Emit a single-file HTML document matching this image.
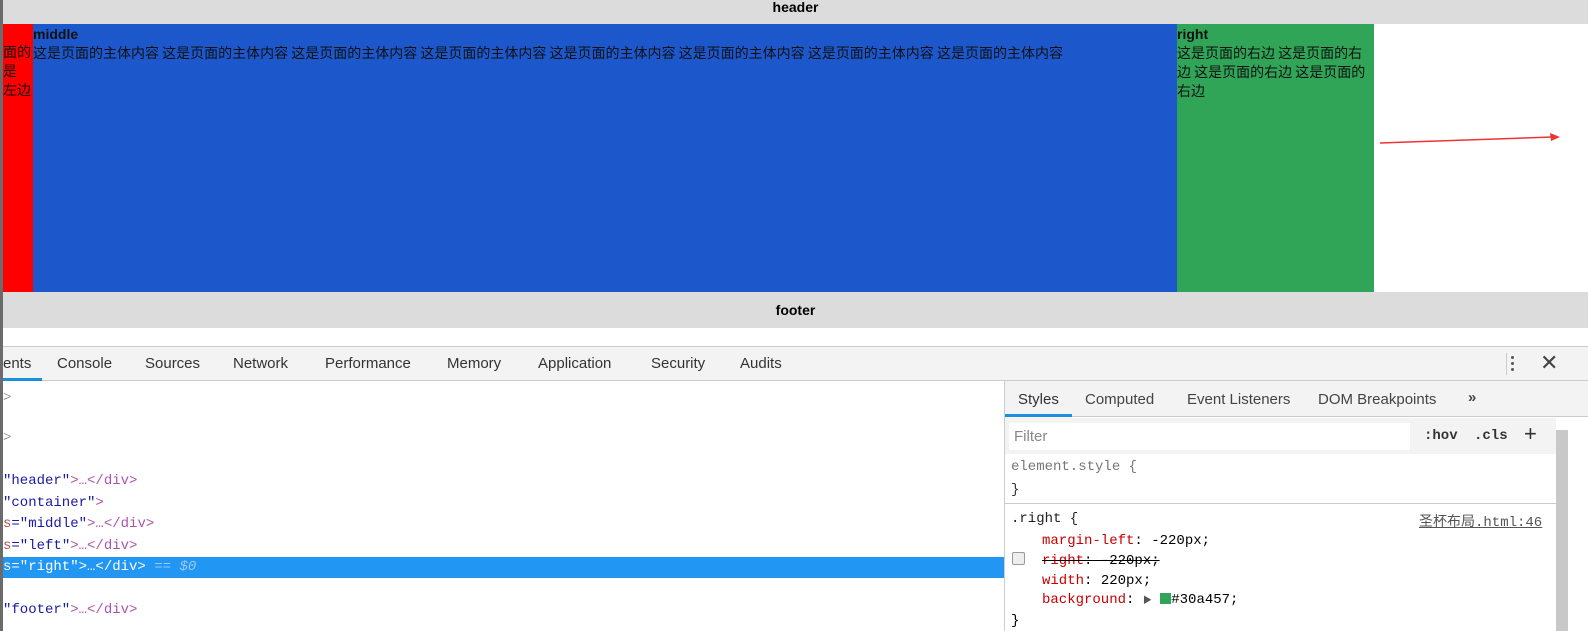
<!DOCTYPE html>
<html><head><meta charset="utf-8"><style>
*{margin:0;padding:0;box-sizing:border-box}
body{width:1588px;height:631px;overflow:hidden;background:#fff;font-family:"Liberation Sans","Noto Sans CJK SC",sans-serif;font-size:13px;position:relative}
.a{position:absolute}
.mono{font-family:"Liberation Mono","Noto Sans CJK SC",monospace;font-size:14px}
.cn{font-family:"Noto Sans CJK SC","WenQuanYi Zen Hei",sans-serif;font-size:14px;line-height:19px;color:#111}
.tab{position:absolute;top:355px;font-size:15px;color:#333}
.st{position:absolute;font-size:15px;color:#444}
.p{color:#c80000}
</style></head><body>
<div class="a" style="left:0;top:0;width:3px;height:631px;background:#6b6b6b"></div>
<div class="a" style="left:3px;top:0;right:0;height:24px;background:#dcdcdc;text-align:center;font-weight:bold;font-size:14px;line-height:14px;padding-top:0">header</div>
<div class="a" style="left:3px;top:24px;width:30px;height:268px;background:#ff0000;overflow:hidden"><div class="cn" style="position:absolute;left:-14px;top:19px;width:45px">页面的<br>这是<br>的左边</div></div>
<div class="a" style="left:33px;top:24px;width:1144px;height:268px;background:#1c58cc"><div style="font-weight:bold;font-size:14px;line-height:19px;color:#111;margin-top:1px">middle</div><div class="cn">这是页面的主体内容 这是页面的主体内容 这是页面的主体内容 这是页面的主体内容 这是页面的主体内容 这是页面的主体内容 这是页面的主体内容 这是页面的主体内容</div></div>
<div class="a" style="left:1177px;top:24px;width:197px;height:268px;background:#30a457"><div style="font-weight:bold;font-size:14px;line-height:19px;color:#111;margin-top:1px">right</div><div class="cn" style="word-break:break-all">这是页面的右边 这是页面的右边 这是页面的右边 这是页面的右边</div></div>
<svg class="a" style="left:1370px;top:125px" width="200" height="30"><line x1="10" y1="18" x2="182" y2="12" stroke="#e33" stroke-width="1.5"/><polygon points="190,12 180,8 181,16" fill="#e33"/></svg>
<div class="a" style="left:3px;top:292px;right:0;height:36px;background:#dcdcdc;text-align:center;font-weight:bold;font-size:14px;line-height:36px">footer</div>
<div class="a" style="left:3px;top:346px;right:0;height:35px;background:#f3f3f3;border-top:1px solid #ccc;border-bottom:1px solid #ccc"></div>
<div class="a" style="left:3px;top:378px;width:39px;height:3px;background:#1a8fe0"></div>
<div class="tab" style="left:3px">ents</div>
<div class="tab" style="left:57px">Console</div>
<div class="tab" style="left:145px">Sources</div>
<div class="tab" style="left:233px">Network</div>
<div class="tab" style="left:325px">Performance</div>
<div class="tab" style="left:447px">Memory</div>
<div class="tab" style="left:538px">Application</div>
<div class="tab" style="left:651px">Security</div>
<div class="tab" style="left:740px">Audits</div>
<div class="a" style="left:1506px;top:353px;width:1px;height:22px;background:#ccc"></div>
<div class="a" style="left:1511px;top:356px;width:3px;height:3px;border-radius:2px;background:#555;box-shadow:0 6px 0 #555,0 12px 0 #555"></div>
<div class="a" style="left:1540px;top:350px;font-size:22px;color:#444">✕</div>
<div class="a mono" style="left:3px;top:390px;color:#999">&gt;</div>
<div class="a mono" style="left:3px;top:430px;color:#999">&gt;</div>
<div class="a mono" style="left:3px;top:473px;color:#1a1aa6"><span>"header"</span><span style="color:#a5a">&gt;…&lt;/div&gt;</span></div>
<div class="a mono" style="left:3px;top:495px;color:#1a1aa6">"container"<span style="color:#a5a">&gt;</span></div>
<div class="a mono" style="left:3px;top:516px;color:#1a1aa6"><span style="color:#a55">s</span>="middle"<span style="color:#a5a">&gt;…&lt;/div&gt;</span></div>
<div class="a mono" style="left:3px;top:538px;color:#1a1aa6"><span style="color:#a55">s</span>="left"<span style="color:#a5a">&gt;…&lt;/div&gt;</span></div>
<div class="a" style="left:3px;top:557px;width:1001px;height:21px;background:#2196f3"></div>
<div class="a mono" style="left:3px;top:559px;color:#fff">s="right"&gt;…&lt;/div&gt; <i style="color:#9cc9f5">== $0</i></div>
<div class="a mono" style="left:3px;top:602px;color:#1a1aa6">"footer"<span style="color:#a5a">&gt;…&lt;/div&gt;</span></div>
<div class="a" style="left:1004px;top:381px;width:1px;height:250px;background:#ccc"></div>
<div class="a" style="left:1005px;top:381px;right:0;height:36px;background:#f3f3f3;border-bottom:1px solid #ccc"></div>
<div class="a" style="left:1005px;top:414px;width:67px;height:3px;background:#1a8fe0"></div>
<div class="st" style="left:1018px;top:391px;color:#333">Styles</div>
<div class="st" style="left:1085px;top:391px">Computed</div>
<div class="st" style="left:1187px;top:391px">Event Listeners</div>
<div class="st" style="left:1318px;top:391px">DOM Breakpoints</div>
<div class="st" style="left:1468px;top:389px;font-weight:bold">»</div>
<div class="a" style="left:1005px;top:418px;width:551px;height:36px;background:#f3f3f3"></div>
<div class="a" style="left:1009px;top:423px;width:401px;height:27px;background:#fff"></div>
<div class="st" style="left:1014px;top:428px;color:#888">Filter</div>
<div class="a mono" style="left:1424px;top:428px;font-weight:bold;color:#333">:hov</div>
<div class="a mono" style="left:1474px;top:428px;font-weight:bold;color:#333">.cls</div>
<div class="a" style="left:1524px;top:421px;font-size:22px;color:#333">+</div>
<div class="a" style="left:1556px;top:430px;width:12px;height:201px;background:#c8c8c8"></div>
<div class="a mono" style="left:1011px;top:459px;color:#777">element.style {</div>
<div class="a mono" style="left:1011px;top:482px;color:#333">}</div>
<div class="a" style="left:1005px;top:503px;width:551px;height:1px;background:#ccc"></div>
<div class="a mono" style="left:1011px;top:511px;color:#222">.right {</div>
<div class="a mono" style="left:1419px;top:511px;color:#555;text-decoration:underline">圣杯布局.html:46</div>
<div class="a mono" style="left:1042px;top:533px"><span class="p">margin-left</span>: -220px;</div>
<div class="a" style="left:1012px;top:552px;width:13px;height:13px;border:1px solid #999;border-radius:2px;background:#eee"></div>
<div class="a mono" style="left:1042px;top:553px;text-decoration:line-through"><span class="p">right</span>: -220px;</div>
<div class="a mono" style="left:1042px;top:573px"><span class="p">width</span>: 220px;</div>
<div class="a mono" style="left:1042px;top:592px"><span class="p">background</span>: <span style="font-size:9px;color:#555">▶</span> <span style="display:inline-block;width:11px;height:11px;background:#30a457;vertical-align:-1px"></span>#30a457;</div>
<div class="a mono" style="left:1011px;top:613px">}</div>
</body></html>
